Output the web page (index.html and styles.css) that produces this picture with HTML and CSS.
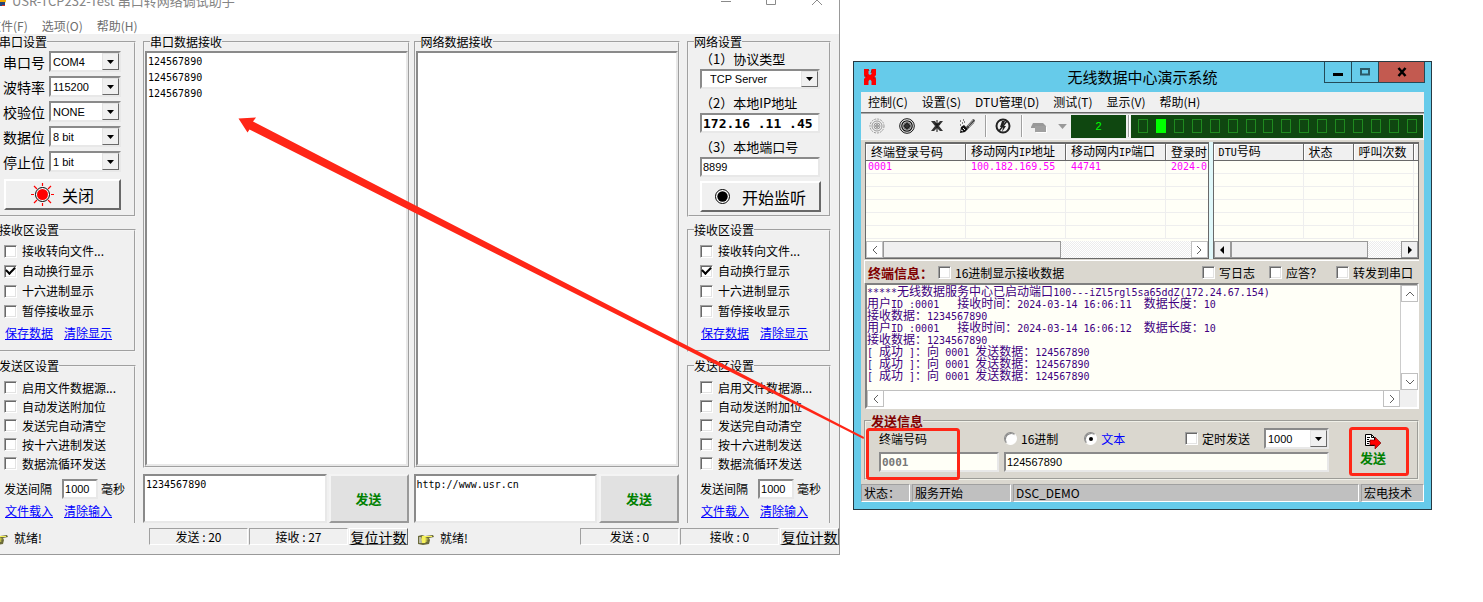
FILE: index.html
```html
<!DOCTYPE html>
<html lang="zh-CN">
<head>
<meta charset="utf-8">
<title>USR-TCP232-Test</title>
<link rel="stylesheet" href="styles.css">
</head>
<body>
<svg class="defs" aria-hidden="true">
  <symbol id="drop" viewBox="0 0 7 4"><path d="M0 0h7L3.500 4z" fill="currentColor"/></symbol>
  <symbol id="hand" viewBox="0 0 16 13">
    <path d="M0 4l4-1 3 1 8-1 1 2-5 1 1 2-1 4-6 1-5-1z" fill="#6b6b3a"/>
    <path d="M4 4l4 0 6 0 0 1-5 0-2 1 4 1-4 1 3 1-3 1 1 1-4 0-1-3z" fill="#f7f25a"/>
    <path d="M1 5l2 0 1 6-3 0z" fill="#b9b9a8"/>
  </symbol>
</svg>
<main class="desktop">
  <section class="usr">
    <header class="usr-title">
      <svg class="usr-logo" viewBox="0 0 7 12"><circle cx="2" cy="5" r="4" fill="#f0a800"/><path d="M0 7h5v4H0z" fill="#24467c"/><path d="M2 10h3v1H2z" fill="#e03020"/></svg>
      <span class="usr-name">USR-TCP232-Test 串口转网络调试助手</span>
      <svg class="usr-ctl" viewBox="0 0 104 14" fill="none" stroke="#8a8a8a"><path d="M0 7.500h10M45.500 0.500h9v10h-9zM91 1l10 10M101 1L91 11"/></svg>
    </header>
    <nav class="usr-menu"><span>文件(F)</span><span>选项(O)</span><span>帮助(H)</span></nav>
    <div class="usr-body">
      <div class="side side-left">
        <fieldset class="g1"><legend>串口设置</legend>
          <div class="pair"><label for="com">串口号</label><div class="combo"><select id="com"><option>COM4</option></select><i><svg><use href="#drop"/></svg></i></div></div>
          <div class="pair"><label for="baud">波特率</label><div class="combo"><select id="baud"><option>115200</option></select><i><svg><use href="#drop"/></svg></i></div></div>
          <div class="pair"><label for="par">校验位</label><div class="combo"><select id="par"><option>NONE</option></select><i><svg><use href="#drop"/></svg></i></div></div>
          <div class="pair"><label for="dat">数据位</label><div class="combo"><select id="dat"><option>8 bit</option></select><i><svg><use href="#drop"/></svg></i></div></div>
          <div class="pair"><label for="stp">停止位</label><div class="combo"><select id="stp"><option>1 bit</option></select><i><svg><use href="#drop"/></svg></i></div></div>
          <button class="big"><svg viewBox="0 0 23 23" width="23" height="23"><path d="M11.500 0v3M11.500 20v3M0 11.500h3M20 11.500h3M3 3l3 3M17 17l3 3M20 3l-3 3M3 20l3-3" stroke="#f00" stroke-width="1.200"/><circle cx="11.500" cy="11.500" r="7" fill="#fff" stroke="#000"/><circle cx="11.500" cy="11.500" r="5.500" fill="#f00"/></svg>关闭</button>
        </fieldset>
        <fieldset class="g2"><legend>接收区设置</legend>
          <label><input type="checkbox">接收转向文件...</label>
          <label><input type="checkbox" checked>自动换行显示</label>
          <label><input type="checkbox">十六进制显示</label>
          <label><input type="checkbox">暂停接收显示</label>
          <div class="links"><a href="#">保存数据</a><a href="#">清除显示</a></div>
        </fieldset>
        <fieldset class="g3"><legend>发送区设置</legend>
          <label><input type="checkbox">启用文件数据源...</label>
          <label><input type="checkbox">自动发送附加位</label>
          <label><input type="checkbox">发送完自动清空</label>
          <label><input type="checkbox">按十六进制发送</label>
          <label><input type="checkbox">数据流循环发送</label>
          <div class="every"><label for="ms1">发送间隔</label><input id="ms1" type="text" value="1000"><span>毫秒</span></div>
          <div class="links"><a href="#">文件载入</a><a href="#">清除输入</a></div>
        </fieldset>
      </div>
      <div class="ports">
        <div class="port">
          <fieldset class="rx"><legend>串口数据接收</legend>
            <textarea readonly aria-label="串口数据接收">124567890
124567890
124567890</textarea></fieldset>
          <div class="tx"><textarea aria-label="串口发送">1234567890</textarea><button>发送</button></div>
        </div>
        <div class="port">
          <fieldset class="rx"><legend>网络数据接收</legend>
            <textarea readonly aria-label="网络数据接收"></textarea></fieldset>
          <div class="tx"><textarea aria-label="网络发送">http://www.usr.cn</textarea><button>发送</button></div>
        </div>
      </div>
      <div class="side side-right">
        <fieldset class="g1"><legend>网络设置</legend>
          <label class="cap" for="proto">（1）协议类型</label>
          <div class="combo wide"><select id="proto"><option>TCP Server</option></select><i><svg><use href="#drop"/></svg></i></div>
          <label class="cap" for="ip">（2）本地IP地址</label>
          <input class="ip" id="ip" type="text" value="172.16 .11 .45">
          <label class="cap" for="pn">（3）本地端口号</label>
          <input id="pn" type="text" value="8899">
          <button class="big"><svg viewBox="0 0 15 15" width="15" height="15"><circle cx="7.500" cy="7.500" r="7" fill="#fff" stroke="#000"/><circle cx="7.500" cy="7.500" r="5.200"/></svg>开始监听</button>
        </fieldset>
        <fieldset class="g2"><legend>接收区设置</legend>
          <label><input type="checkbox">接收转向文件...</label>
          <label><input type="checkbox" checked>自动换行显示</label>
          <label><input type="checkbox">十六进制显示</label>
          <label><input type="checkbox">暂停接收显示</label>
          <div class="links"><a href="#">保存数据</a><a href="#">清除显示</a></div>
        </fieldset>
        <fieldset class="g3"><legend>发送区设置</legend>
          <label><input type="checkbox">启用文件数据源...</label>
          <label><input type="checkbox">自动发送附加位</label>
          <label><input type="checkbox">发送完自动清空</label>
          <label><input type="checkbox">按十六进制发送</label>
          <label><input type="checkbox">数据流循环发送</label>
          <div class="every"><label for="ms2">发送间隔</label><input id="ms2" type="text" value="1000"><span>毫秒</span></div>
          <div class="links"><a href="#">文件载入</a><a href="#">清除输入</a></div>
        </fieldset>
      </div>
    </div>
    <footer class="usr-foot">
      <div class="half half-left"><span class="ready"><svg class="hand"><use href="#hand"/></svg>就绪!</span><span class="count">发送 : 20</span><span class="count">接收 : 27</span><button>复位计数</button></div>
      <div class="half"><span class="ready"><svg class="hand"><use href="#hand"/></svg>就绪!</span><span class="count">发送 : 0</span><span class="count">接收 : 0</span><button>复位计数</button></div>
    </footer>
  </section>

  <section class="dsc">
    <header class="dsc-title">
      <svg class="dsc-logo" viewBox="0 0 12 16"><path d="M0 0h4.500v5l1.500 1 1.500-1V0H12v6l-1.500 2L12 10v6H7.500v-4L6 10.500 4.500 12v4H0v-6l1.500-2L0 6z" fill="#f00"/><path d="M4 0l1 2M8 1L7 4M0 7h3M9 9h3" stroke="#a01818" fill="none"/></svg>
      <h1>无线数据中心演示系统</h1>
      <div class="ctl"><button aria-label="最小化"><svg viewBox="0 0 12 12"><path d="M1 7h10v3H1z"/></svg></button><button aria-label="最大化"><svg viewBox="0 0 12 12"><path d="M2 3h8v5.500H2z" fill="none" stroke="#2c5a68" stroke-width="2"/></svg></button><button class="x" aria-label="关闭"><svg viewBox="0 0 12 12"><path d="M2.500 2l7 8M9.500 2l-7 8" stroke="#000" stroke-width="2.500"/></svg></button></div>
    </header>
    <div class="client">
      <nav class="dsc-menu"><span>控制(C)</span><span>设置(S)</span><span>DTU管理(D)</span><span>测试(T)</span><span>显示(V)</span><span>帮助(H)</span></nav>
      <div class="tools">
        <button aria-label="停止"><svg viewBox="0 0 16 16" fill="none" stroke="#999"><circle cx="8" cy="8" r="7" stroke-dasharray="2 1"/><circle cx="8" cy="8" r="5"/><circle cx="8" cy="8" r="3"/><circle cx="8" cy="8" r="1.500" fill="#aaa"/></svg></button>
        <button aria-label="启动"><svg viewBox="0 0 16 16" fill="none" stroke="#111"><circle cx="8" cy="8" r="7.300"/><circle cx="8" cy="8" r="5.200" stroke-width="1.300"/><circle cx="8" cy="8" r="3.500" stroke="#555"/><circle cx="8" cy="8" r="2.500" fill="#333"/></svg></button>
        <button aria-label="断开"><svg viewBox="0 0 16 16"><path d="M2 3h4l2 3 3-3h3l-4 5 4 5h-3l-3-3-3 3H2l4-5z" fill="#333"/><path d="M8 2v12M6 6h5" stroke="#111"/></svg></button>
        <button aria-label="清除"><svg viewBox="0 0 16 16"><path d="M7 9l7-8 2 1-1 3-6 6z" fill="#444"/><path d="M9 8l5-6M10 9l5-5" stroke="#ccc" stroke-width=".7"/><path d="M2 9l3-2 4 4-3 3-5 1z" fill="#111"/><path d="M1 3h1M4 2h1M3 5h1M1 7h1M5 4h1" stroke="#111"/><path d="M2 12l2 1M4 10l2 2" stroke="#eee"/></svg></button>
        <hr>
        <button aria-label="中断"><svg viewBox="0 0 16 16" fill="none" stroke="#222"><circle cx="8" cy="8" r="6.500" stroke-width="2"/><path d="M4 13l8-10" stroke-width="1.500"/><path d="M7 3l3 0-2 5 3 0-4 6 1-5-3 0z" fill="#222" stroke="none"/></svg></button>
        <hr>
        <button aria-label="电话" class="tel"><svg viewBox="0 0 16 16"><path d="M0 9l2-4h10l3 3v2h-4V9H4v1H0z" fill="#999"/><path d="M4 8h11v6H4z" fill="#a0a0a0"/><path d="M5 14.500h10.500V9" fill="none" stroke="#fff"/></svg></button>
        <svg class="more"><use href="#drop"/></svg>
        <output class="num">2</output>
        <hr class="thin">
        <div class="leds"><i></i><i class="on"></i><i></i><i></i><i></i><i></i><i></i><i></i><i></i><i></i><i></i><i></i><i></i><i></i><i></i><i></i></div>
      </div>
      <div class="work">
        <div class="lists">
          <div class="list">
            <table class="t-left"><thead><tr><th>终端登录号码</th><th>移动网内<span>IP</span>地址</th><th>移动网内<span>IP</span>端口</th><th>登录时</th></tr></thead>
            <tbody><tr><td>0001</td><td>100.182.169.55</td><td>44741</td><td>2024-0</td></tr><tr><td></td><td></td><td></td><td></td></tr><tr><td></td><td></td><td></td><td></td></tr><tr><td></td><td></td><td></td><td></td></tr><tr><td></td><td></td><td></td><td></td></tr><tr><td></td><td></td><td></td><td></td></tr></tbody></table>
            <div class="hbar flat"><b><svg viewBox="0 0 8 8"><path d="M6 0L2 4l4 4"/></svg></b><span class="thumb"></span><b class="end"><svg viewBox="0 0 8 8"><path d="M2 0l4 4-4 4"/></svg></b></div>
          </div>
          <div class="list">
            <table class="t-right"><thead><tr><th><span>DTU</span>号码</th><th>状态</th><th>呼叫次数</th><th></th></tr></thead>
            <tbody><tr><td></td><td></td><td></td><td></td></tr><tr><td></td><td></td><td></td><td></td></tr><tr><td></td><td></td><td></td><td></td></tr><tr><td></td><td></td><td></td><td></td></tr><tr><td></td><td></td><td></td><td></td></tr><tr><td></td><td></td><td></td><td></td></tr></tbody></table>
            <div class="hbar solid"><b><svg viewBox="0 0 8 8"><path d="M6 0L2 4l4 4z"/></svg></b><span class="thumb"></span><b class="end"><svg viewBox="0 0 8 8"><path d="M2 0l4 4-4 4z"/></svg></b></div>
          </div>
        </div>
        <div class="info"><strong>终端信息：</strong><label><input type="checkbox">16进制显示接收数据</label><span class="fill"></span><label><input type="checkbox">写日志</label><label><input type="checkbox">应答？</label><label><input type="checkbox">转发到串口</label></div>
        <div class="logbox">
          <div class="log" role="log">
            <p>*****<span>无线数据服务中心已启动端口</span>100---iZl5rgl5sa65ddZ(172.24.67.154)</p>
            <p><span>用户</span>ID :0001   <span>接收时间：</span>2024-03-14 16:06:11  <span>数据长度：</span>10</p>
            <p><span>接收数据：</span>1234567890</p>
            <p><span>用户</span>ID :0001   <span>接收时间：</span>2024-03-14 16:06:12  <span>数据长度：</span>10</p>
            <p><span>接收数据：</span>1234567890</p>
            <p>[ <span>成功</span> ]<span>：向</span> 0001 <span>发送数据：</span>124567890</p>
            <p>[ <span>成功</span> ]<span>：向</span> 0001 <span>发送数据：</span>124567890</p>
            <p>[ <span>成功</span> ]<span>：向</span> 0001 <span>发送数据：</span>124567890</p>
          </div>
          <div class="vbar"><b><svg viewBox="0 0 8 8"><path d="M0 6l4-4 4 4"/></svg></b><b><svg viewBox="0 0 8 8"><path d="M0 2l4 4 4-4"/></svg></b></div>
          <div class="hbar flat line"><b><svg viewBox="0 0 8 8"><path d="M6 0L2 4l4 4"/></svg></b><b class="end"><svg viewBox="0 0 8 8"><path d="M2 0l4 4-4 4"/></svg></b></div>
          <div class="corner"></div>
        </div>
        <fieldset class="send"><legend>发送信息</legend>
          <div class="send-grid">
            <label for="tid">终端号码</label>
            <div class="opts"><label><input type="radio" name="m">16进制</label><label class="blue"><input type="radio" name="m" checked>文本</label><span class="fill"></span><label><input type="checkbox">定时发送</label><div class="combo"><select aria-label="间隔"><option>1000</option></select><i><svg><use href="#drop"/></svg></i></div></div>
            <input id="tid" class="tid" type="text" value="0001">
            <div class="field"><input type="text" aria-label="发送内容" value="124567890"></div>
            <button class="go"><svg viewBox="0 0 16 16"><path d="M.500 1.500h6l3 3v8h-9z" fill="#fff" stroke="#000"/><path d="M6.500 1.500v3h3M2 4.500h3M2 6.500h2M2 8.500h3M2 10.500h2" fill="none" stroke="#000"/><path d="M5 7h5V4l6 6-6 6v-4H5z" fill="#f00" stroke="#600" stroke-width=".6"/></svg>发送</button>
          </div>
        </fieldset>
      </div>
      <footer class="dsc-foot"><span class="s1">状态：</span><span class="s2">服务开始</span><span class="s3">DSC_DEMO</span><span class="s4">宏电技术</span></footer>
    </div>
  </section>

  <svg class="marks" viewBox="0 0 1483 602" preserveAspectRatio="none">
    <path d="M238.500 118.500L256 117.500L253 121.500L864 437L863.500 439L249.500 129.500L247.500 132.500z" fill="#ff2617"/>
    <g fill="none" stroke="#ff2617" stroke-width="3"><rect x="867.500" y="429.500" width="91" height="49" rx="2"/><rect x="1350.500" y="428.500" width="57" height="46" rx="2"/></g>
  </svg>
</main>
</body>
</html>
```

FILE: styles.css
```css
* { box-sizing: border-box; }
body { margin: 0; background: #fff; color: #000; font: 12px/14px "Noto Sans CJK SC", sans-serif; }
button, select, input, textarea { font: inherit; color: inherit; margin: 0; border-radius: 0; outline: 0; }
button { padding: 0; white-space: nowrap; }
fieldset { margin: 0; padding: 0; min-width: 0; }
legend { padding: 0; line-height: 14px; }
a { color: #00f; }
.defs { position: absolute; width: 0; height: 0; }
.desktop { position: relative; display: grid; grid-template-columns: minmax(0, 840fr) minmax(0, 579fr); column-gap: 13px; padding-right: 51px; align-items: start; min-height: 100vh; overflow: hidden; }
.marks { position: absolute; left: 0; top: 0; width: 100%; height: 602px; pointer-events: none; }

/* shared controls */
input[type=checkbox], input[type=radio] { appearance: none; flex: none; width: 13px; height: 13px; background: #fff; border: 1px solid; border-color: #a0a0a0 #fff #fff #a0a0a0; box-shadow: inset 1px 1px #696969, inset -1px -1px #e3e3e3; }
input[type=checkbox]:checked { display: grid; place-items: center; }
input[type=checkbox]:checked::before { content: ""; width: 7px; height: 4px; border: solid #000; border-width: 0 0 2px 2px; transform: rotate(-45deg) translate(1px, -1px); }
input[type=radio] { border-radius: 50%; border-color: #888 #fff #fff #888; box-shadow: inset 1px 1px #888; display: grid; place-items: center; }
input[type=radio]:checked::before { content: ""; width: 4px; height: 4px; border-radius: 50%; background: #000; }
input[type=text], textarea, .combo { background: #fff; border: 2px solid; border-color: #8a8a8a #e8e8e8 #e8e8e8 #8a8a8a; }
input[type=text] { height: 20px; padding: 0 1px; min-width: 0; font: 11px "Liberation Sans", sans-serif; }
textarea { display: block; resize: none; padding: 1px 1px; font: 10px/16px "DejaVu Sans Mono", monospace; overflow: hidden; }
.combo { display: flex; height: 21px; }
.combo select { appearance: none; flex: 1; min-width: 0; border: 0; background: none; padding: 0 2px; font: 11px "Liberation Sans", sans-serif; }
.combo i { flex: none; width: 17px; background: #f0f0f0; border: 1px solid; border-color: #e3e3e3 #696969 #696969 #e3e3e3; display: grid; place-items: center; }
.combo svg { width: 7px; height: 4px; }
.fill { flex: 1; }

/* serial tool window */
.usr { height: 555px; background: #f0f0f0; border: solid #999; border-width: 0 1px 1px 0; overflow: hidden; }
.usr-title { height: 30px; margin-top: -14px; background: #fff; color: #858585; display: flex; align-items: center; }
.usr-logo { width: 7px; height: 12px; margin-right: 5px; }
.usr-name { flex: 1; white-space: nowrap; font-size: 13px; }
.usr-ctl { width: 104px; height: 14px; margin-right: 14px; }
.usr-menu { height: 18px; background: #fff; color: #6d6d6d; display: flex; gap: 14px; line-height: 20px; }
.usr-menu span:first-child { margin-left: -11px; }
.usr-body { display: flex; gap: 7px; height: 489px; padding: 1px 8px 0 0; }
.side { display: flex; flex-direction: column; }
.side-left { flex: none; width: 136px; }
.side-right { flex: none; width: 144px; }
.side fieldset, .rx { border: 2px groove #f4f4f4; }
.side-left fieldset { border-left: 0; padding-left: 4px; }
.side-left legend { margin-left: -5px; }
.side-right fieldset { padding-left: 11px; }
.side-right legend { margin-left: -6px; }
.side .g1 { height: 182px; margin-bottom: 6px; }
.side .g2 { height: 129px; margin-bottom: 7px; padding-top: 4px; }
.side .g3 { flex: 1; border-bottom: 0; padding-top: 5px; }
.g2 > label, .g3 > label { display: flex; align-items: center; gap: 5px; height: 20px; white-space: nowrap; }
.g3 > label { height: 19px; }
.links { display: flex; gap: 11px; line-height: 20px; padding: 2px 0 0 1px; }
.every { display: flex; align-items: center; gap: 3px; margin-top: 6px; height: 20px; }
.every input { width: 36px; margin-left: 7px; }
.pair { display: flex; align-items: center; justify-content: space-between; height: 25px; padding-right: 13px; font-size: 14px; }
.pair .combo { width: 72px; }
.pair label { margin-left: -1px; }
.big { display: flex; align-items: center; justify-content: center; width: 117px; height: 31px; margin-top: 5px; background: #f0f0f0; border: 2px solid; border-color: #fff #696969 #696969 #fff; font-size: 16px; gap: 8px; }
.side-right .big { width: 121px; margin-top: 4px; gap: 12px; }
.cap { display: block; line-height: 20px; font-size: 13px; margin: 4px 0 0 0; white-space: nowrap; }
.side-right legend + .cap { margin-top: 0; }
.combo.wide, .side-right .g1 > input { width: 120px; height: 20px; }
.wide select { padding-left: 8px; }
.side-right .g1 > input { display: block; }
.side-right .g1 > input.ip { font: bold 13px "DejaVu Sans Mono", monospace; }
.ports { flex: 1; min-width: 0; display: grid; grid-template-columns: 1fr 1fr; gap: 4px; }
.port { display: flex; flex-direction: column; gap: 6px; min-width: 0; }
.rx { height: 433px; }
.rx legend { margin-left: 5px; }
.rx textarea { width: 100%; height: 415px; margin-top: 2px; }
.tx { display: flex; height: 49px; gap: 2px; padding: 0 1px 0 0; }
.tx textarea { flex: 1; min-width: 0; }
.tx button { width: 80px; background: #e1e1e1; border: 2px solid; border-color: #f4f4f4 #999 #999 #f4f4f4; color: #008000; font-weight: bold; font-size: 13px; }
.usr-foot { display: flex; height: 31px; padding-top: 5px; }
.half { display: flex; flex: 1; align-items: flex-start; gap: 1px; }
.half-left { flex: none; width: 408px; margin-right: 10px; }
.half-left .ready { margin-left: -8px; }
.ready { flex: 1; display: flex; align-items: center; gap: 6px; height: 20px; }
.hand { width: 16px; height: 13px; }
.count { width: 99px; height: 17px; line-height: 16px; text-align: center; border: 1px solid; border-color: #a0a0a0 #fff #fff #a0a0a0; }
.half button { width: 59px; height: 17px; line-height: 14px; font-size: 14px; background: #e9e9e9; border: 1px solid; border-color: #fff #696969 #696969 #fff; }

/* data centre window */
.dsc { margin-top: 61px; background: #66cbea; border: 1px solid #263942; padding: 0 7px 7px; }
.dsc-title { display: flex; height: 30px; align-items: center; }
.dsc-logo { width: 12px; height: 16px; margin-left: 3px; }
.dsc-title h1 { flex: 1; margin: 0; padding-left: 84px; text-align: center; font-size: 15px; font-weight: normal; line-height: 28px; }
.ctl { display: flex; align-self: flex-start; margin-right: -1px; }
.ctl button { width: 28px; height: 21px; background: #66cbea; border: 1px solid #234a58; border-top: 0; margin-left: -1px; display: grid; place-items: center; }
.ctl svg { width: 12px; height: 12px; }
.ctl .x { width: 47px; background: #c35a50; }
.client { background: #dad7cf; }
.dsc-menu { display: flex; gap: 14px; height: 21px; padding-left: 7px; line-height: 19px; background: #f0f0f0; border-bottom: 1px solid #696969; }
.tools { display: flex; align-items: center; height: 27px; padding: 1px 1px 2px 8px; background: #f0f0f0; border-top: 1px solid #aaa; border-bottom: 1px solid #f8f8f8; }
.tools button { width: 16px; height: 16px; margin-right: 14px; background: none; border: 0; }
.tools button svg { display: block; width: 16px; height: 16px; }
.tools hr { width: 2px; height: 22px; margin: 0 8px 0 -4px; border: solid; border-width: 0 1px; border-color: #fff #fff #fff #a0a0a0; }
.tools .tel { margin-right: 11px; }
.more { width: 9px; height: 5px; color: #999; margin-right: 4px; }
.num { width: 55px; height: 23px; line-height: 23px; text-align: center; background: #0f4710; color: #0f0; font-family: "Liberation Sans", sans-serif; font-size: 11px; }
.tools .thin { margin: 0 1px 0 2px; }
.leds { flex: 1; height: 23px; display: flex; justify-content: space-between; align-items: center; padding: 0 6px 0 7px; background: #0f4710; }
.leds i { width: 10px; height: 14px; border: 1px solid #1f8a1f; }
.leds .on { background: #0f0; border-color: #0f0; }
.work { padding: 2px 5px 4px 3px; }
.lists { display: grid; grid-template-columns: minmax(0, 343fr) minmax(0, 206fr); gap: 4px; margin-left: 1px; background: #e0f8fa; }
.list { background: #fffff7; border: 1px solid #696969; border-top-width: 2px; overflow: hidden; }
table { border-collapse: separate; border-spacing: 0; table-layout: fixed; width: 400px; }
.t-left th { width: 100px; }
.t-right { width: 250px; }
.t-right th:nth-child(1) { width: 90px; }
.t-right th:nth-child(2), .t-right th:nth-child(4) { width: 50px; }
.t-right th:nth-child(3) { width: 60px; }
th { height: 15px; padding: 0 0 0 5px; text-align: left; font-weight: normal; line-height: 14px; background: #f0f0f0; border: solid; border-width: 0 1px 1px 0; border-color: #696969; box-shadow: inset 1px 1px #fff; white-space: nowrap; }
th span, td { font-family: "DejaVu Sans Mono", monospace; font-size: 10px; }
td { height: 13px; line-height: 12px; padding: 0 0 0 5px; color: #f0f; border: solid #eee; border-width: 0 1px 1px 0; white-space: nowrap; }
td:first-child { padding-left: 2px; }
.hbar { display: flex; height: 17px; margin-top: 2px; background: repeating-conic-gradient(#fff 0 25%, #ececec 0 50%) 0 0 / 2px 2px; }
.hbar b, .vbar b { flex: none; width: 17px; height: 17px; background: #fff; border: 1px solid #c0c0c0; display: grid; place-items: center; }
.hbar svg, .vbar svg { width: 8px; height: 8px; fill: none; stroke: #606060; }
.hbar .end { margin-left: auto; }
.thumb { width: 52%; background: #f0f0f0; border: 1px solid #999; }
.solid .thumb { width: 67%; }
.solid b { background: #f0f0f0; border-color: #999; }
.hbar.solid svg { fill: #000; stroke: none; }
.info { display: flex; align-items: center; height: 23px; margin-top: 1px; padding: 1px 6px 0 3px; border-top: 1px solid #fff; border-left: 1px solid #fff; }
.info strong { font-size: 13px; color: #800000; margin-right: 5px; }
.info label, .opts label { display: flex; align-items: center; gap: 4px; }
.info label + label { margin-left: 14px; }
.logbox { display: grid; grid-template-columns: minmax(0, 1fr) 17px; margin-left: 1px; border: 2px solid; border-color: #808080 #fff #fff #808080; background: #fffff7; }
.log { height: 105px; color: #400080; font: 10px/12px "DejaVu Sans Mono", monospace; overflow: hidden; }
.log p { margin: 0; height: 12px; white-space: pre; }
.log span { font-family: "Noto Sans CJK SC", sans-serif; font-size: 12px; line-height: 12px; }
.vbar { display: flex; flex-direction: column; justify-content: space-between; background: #fff; border-left: 1px solid #ccc; }
.hbar.line { margin: 0; background: #fff; border: solid #c0c0c0; border-width: 1px 0 0; }
.hbar.line b { height: 16px; border-top: 0; }
.corner { background: #f0f0f0; }
.send { margin: 5px 0 0 0; height: 66px; padding: 0 10px 0 13px; border: 2px groove #f0f0e8; }
.send legend { color: #800000; font-weight: bold; font-size: 13px; margin-left: -8px; }
.send-grid { display: grid; grid-template-columns: 120px minmax(0, 1fr) 73px; column-gap: 5px; row-gap: 3px; align-items: center; }
.opts { display: flex; align-items: center; height: 21px; }
.opts label + label { margin-left: 26px; }
.opts .combo { width: 65px; margin-left: 14px; }
.blue { color: #00f; }
.send-grid input[type=text] { background: #fffff7; width: 100%; }
.send-grid .tid { font-weight: bold; color: #777; font-family: "DejaVu Sans Mono", monospace; }
.go { grid-column: 3; grid-row: 1 / 3; margin-left: 26px; background: none; border: 0; color: #008000; font-weight: bold; font-size: 13px; line-height: 18px; justify-self: start; display: flex; flex-direction: column; align-items: center; }
.go svg { width: 16px; height: 16px; }
.dsc-foot { display: flex; gap: 2px; height: 18px; line-height: 16px; background: #c0c0c0; }
.dsc-foot span { padding-left: 2px; border: 1px solid; border-color: #a0a0a0 #fff #fff #a0a0a0; white-space: nowrap; }
.s1 { width: 49px; }
.s2 { width: 99px; }
.s3 { flex: 1; }
.s4 { width: 63px; }
```
